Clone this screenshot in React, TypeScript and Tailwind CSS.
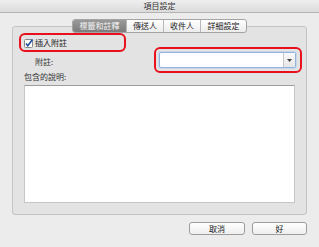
const font = { fontFamily: '"Noto Sans CJK TC", "Noto Sans", sans-serif' };

const tabs = [
    { label: "標籤和註釋", w: "w-[53px]", active: true },
    { label: "傳送人", w: "w-[37px]", active: false },
    { label: "收件人", w: "w-[37px]", active: false },
    { label: "詳細設定", w: "w-[46px]", active: false },
];

const App = () => {
    return (
        <div
            className="relative w-[319px] h-[247px] overflow-hidden bg-[#ececec] text-[8px] leading-[10px] text-[#1a1a1a]"
            style={font}
        >
            {/* title bar */}
            <div className="h-[13px] flex items-center justify-center border-b border-[#b4b4b4] bg-gradient-to-b from-[#eeeeee] to-[#dcdcdc] text-[#333]">
                項目設定
            </div>

            <div className="px-[12px]">
                {/* tabs */}
                <div className="relative z-10 mt-[6px] -mb-[7px] flex justify-center">
                    <div className="flex h-[14px] rounded-[3px] border border-[#a4a4a4] bg-gradient-to-b from-[#ffffff] to-[#ececec] overflow-hidden">
                        {tabs.map((t, i) => (
                            <div
                                key={t.label}
                                className={`${t.w} flex items-center justify-center ${i > 0 ? "border-l border-[#b8b8b8]" : ""} ${t.active ? "bg-gradient-to-b from-[#9a9a9a] to-[#7c7c7c] text-[#f4f4f4]" : "text-[#222]"}`}
                            >
                                {t.label}
                            </div>
                        ))}
                    </div>
                </div>

                {/* group panel */}
                <div className="w-[295px] rounded-[3px] border border-[#c4c4c4] bg-[#e3e3e3] px-[11px] pt-[11px] pb-[11px]">
                    <div className="flex h-[10px] items-center gap-[2px]">
                        <svg width="9" height="9" viewBox="0 0 9 9">
                            <rect x="0.5" y="0.5" width="8" height="8" rx="1" fill="#fff" stroke="#8a8a8a" />
                            <path d="M2 4.5 L3.8 6.8 L8.5 0.5" fill="none" stroke="#1d4f9e" strokeWidth="1.6" />
                        </svg>
                        <span>插入附註</span>
                    </div>

                    <div className="mt-[4px] flex h-[16px] items-center">
                        <span className="pl-[11px] pt-[3px] text-[#333]">附註:</span>
                        <div className="ml-auto -mr-[1px] flex h-[16px] w-[137px] rounded-[2px] border border-[#93b3da] bg-white shadow-[0_0_0_1px_#c6d8ee]">
                            <div className="flex-1" />
                            <div className="flex w-[12px] items-center justify-center border-l border-[#c7c7c7] bg-gradient-to-b from-[#fafafa] to-[#e6e6e6]">
                                <svg width="5" height="3" viewBox="0 0 5 3">
                                    <path d="M0 0 H5 L2.5 3 Z" fill="#444" />
                                </svg>
                            </div>
                        </div>
                    </div>

                    <div className="mt-[4px] h-[10px] text-[#333]">包含的說明:</div>

                    <div className="mt-[3px] h-[118px] border border-[#c6c6c6] border-t-[#9c9c9c] bg-white" />
                </div>

                {/* buttons */}
                <div className="mt-[7px] flex justify-end gap-[7px]">
                    <div className="flex h-[13px] w-[56px] items-center justify-center rounded-[3px] border border-[#9c9c9c] bg-gradient-to-b from-[#ffffff] to-[#eeeeee]">
                        取消
                    </div>
                    <div className="flex h-[13px] w-[55px] items-center justify-center rounded-[3px] border border-[#9c9c9c] bg-gradient-to-b from-[#ffffff] to-[#eeeeee]">
                        好
                    </div>
                </div>
            </div>

            {/* red annotation frames */}
            <div className="absolute left-[19px] top-[33px] h-[19px] w-[107px] rounded-[6px] border-2 border-[#e8101c]" />
            <div className="absolute left-[154px] top-[47px] h-[26px] w-[148px] rounded-[6px] border-2 border-[#e8101c]" />
        </div>
    );
};

export default App;
